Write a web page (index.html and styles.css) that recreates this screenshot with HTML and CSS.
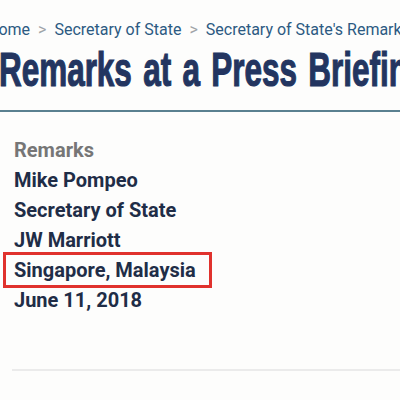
FILE: index.html
```html
<!DOCTYPE html>
<html>
<head>
<meta charset="utf-8">
<link rel="stylesheet" href="styles.css">
</head>
<body>
<div class="page">
  <nav class="crumbs">
    <span class="crumb">Home</span><span class="sep">&gt;</span><span class="crumb">Secretary of State</span><span class="sep">&gt;</span><span class="crumb">Secretary of State's Remarks</span>
  </nav>
  <h1 class="title">Remarks at a Press Briefing</h1>
  <div class="rule"></div>
  <div class="meta">
    <div class="kind">Remarks</div>
    <div class="line">Mike Pompeo</div>
    <div class="line">Secretary of State</div>
    <div class="line">JW Marriott</div>
    <div class="line boxed">Singapore, Malaysia</div>
    <div class="line">June 11, 2018</div>
  </div>
  <div class="bottom-rule"></div>
</div>
</body>
</html>
```
FILE: styles.css
```css
html, body {
  margin: 0;
  padding: 0;
  background: #fdfdfc;
}
.page {
  width: 400px;
  height: 400px;
  overflow: hidden;
  font-family: Roboto, "Liberation Sans", sans-serif;
}
.crumbs {
  white-space: nowrap;
  margin-left: -13px;
  padding-top: 20px;
  font-size: 16px;
  line-height: 20px;
  color: #2c5a82;
}
.sep {
  color: #a0a4a8;
  margin: 0 8px;
}
.title {
  margin: 2px 0 0 -1px;
  width: 640px;
  white-space: nowrap;
  font-family: "Liberation Sans", Arial, sans-serif;
  font-weight: bold;
  font-size: 48px;
  line-height: 56px;
  word-spacing: 4px;
  color: #233560;
  -webkit-text-stroke: 1.2px #233560;
  transform: scaleX(0.655);
  transform-origin: left center;
}
.rule {
  margin-top: 12px;
  height: 2px;
  background: #5a8090;
}
.meta {
  padding: 23px 0 0 14px;
  font-weight: bold;
  font-size: 20px;
  line-height: 30px;
  color: #1f2d47;
}
.kind {
  color: #767676;
}
.boxed {
  box-sizing: border-box;
  margin-left: -11px;
  padding-left: 8px;
  width: 209px;
  border: 3px solid #e0322d;
  line-height: 30px;
  margin-top: -3px;
  margin-bottom: -3px;
}
.bottom-rule {
  margin: 54px 0 0 12px;
  height: 2px;
  background: #ebebeb;
}
```
